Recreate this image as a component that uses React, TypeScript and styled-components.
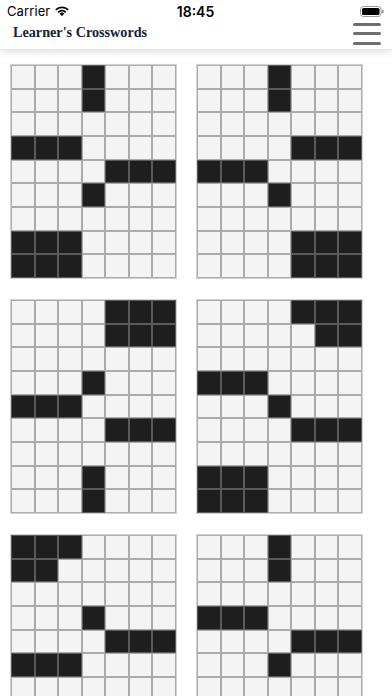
import React from "react";
import styled, { createGlobalStyle } from "styled-components";

const GlobalStyle = createGlobalStyle`
  html, body {
    margin: 0;
    padding: 0;
    background: #ffffff;
    font-family: "Inter", "Roboto", "Liberation Sans", sans-serif;
  }
  * { box-sizing: border-box; }
`;

const Header = styled.header`
  background: #ffffff;
  box-shadow: 0 2px 8px rgba(0, 0, 0, 0.16);
  position: relative;
  z-index: 2;
`;

const StatusBar = styled.div`
  height: 22px;
  display: grid;
  grid-template-columns: 1fr auto 1fr;
  align-items: center;
  padding: 0 8px 0 7px;
  color: #000;
`;

const Carrier = styled.div`
  display: flex;
  align-items: center;
  gap: 4px;
  font-size: 13px;
  letter-spacing: 0.1px;
`;

const Time = styled.div`
  font-size: 14px;
  font-weight: 600;
  text-align: center;
`;

const Battery = styled.div`
  display: flex;
  justify-content: flex-end;
  align-items: center;
`;

const AppBar = styled.div`
  height: 27px;
  display: flex;
  align-items: center;
  justify-content: space-between;
  padding: 0 11px 7px 13px;
`;

const Title = styled.h1`
  margin: 0;
  font-family: "Liberation Serif", "Times New Roman", serif;
  font-weight: 700;
  font-size: 14.2px;
  color: #10233a;
`;

const Burger = styled.div`
  display: flex;
  flex-direction: column;
  gap: 6.5px;
  width: 28px;
  margin-top: 3px;
`;

const Bar = styled.span`
  display: block;
  height: 3px;
  border-radius: 2px;
  background: #6e6e6e;
`;

const Main = styled.main`
  padding: 15px 0 0 10px;
  display: flex;
  flex-wrap: wrap;
  column-gap: 19px;
  row-gap: 20px;
`;

const Puzzle = styled.div`
  width: 167px;
  height: 215px;
  border: 1px solid #d2d2d2;
  display: grid;
  grid-template-columns: repeat(7, 1fr);
  grid-template-rows: repeat(9, 1fr);
`;

const Cell = styled.div<{ $block: boolean }>`
  border: 1px solid ${(p) => (p.$block ? "#5a5a5a" : "#ababab")};
  background: ${(p) => (p.$block ? "#1e1e1e" : "#f4f4f4")};
`;

const patterns: number[][][] = [
  [[3], [3], [], [0, 1, 2], [4, 5, 6], [3], [], [0, 1, 2], [0, 1, 2]],
  [[3], [3], [], [4, 5, 6], [0, 1, 2], [3], [], [4, 5, 6], [4, 5, 6]],
  [[4, 5, 6], [4, 5, 6], [], [3], [0, 1, 2], [4, 5, 6], [], [3], [3]],
  [[4, 5, 6], [5, 6], [], [0, 1, 2], [3], [4, 5, 6], [], [0, 1, 2], [0, 1, 2]],
  [[0, 1, 2], [0, 1], [], [3], [4, 5, 6], [0, 1, 2], [], [5, 6], [4, 5, 6]],
  [[3], [3], [], [0, 1, 2], [4, 5, 6], [3], [], [0, 1, 2], [0, 1, 2]],
];

const Wifi = () => (
  <svg width="16" height="12" viewBox="0 0 16 12">
    <path d="M8 11.2 L5.6 8.6 A3.6 3.6 0 0 1 10.4 8.6 Z" fill="#000" />
    <path d="M3.6 6.6 A6.4 6.4 0 0 1 12.4 6.6 L11.2 7.9 A4.6 4.6 0 0 0 4.8 7.9 Z" fill="#000" />
    <path d="M1.2 4.2 A9.8 9.8 0 0 1 14.8 4.2 L13.6 5.5 A8 8 0 0 0 2.4 5.5 Z" fill="#000" />
  </svg>
);

const BatteryIcon = () => (
  <svg width="24" height="11" viewBox="0 0 24 11">
    <rect x="0.5" y="0.5" width="20.5" height="10" rx="2.8" fill="none" stroke="#9a9a9a" />
    <rect x="2" y="2" width="17.5" height="7" rx="1.6" fill="#000" />
    <path d="M22 3.6 a1.6 1.6 0 0 1 0 3.8 Z" fill="#9a9a9a" />
  </svg>
);

export default function App() {
  return (
    <>
      <GlobalStyle />
      <Header>
        <StatusBar>
          <Carrier>
            Carrier <Wifi />
          </Carrier>
          <Time>18:45</Time>
          <Battery>
            <BatteryIcon />
          </Battery>
        </StatusBar>
        <AppBar>
          <Title>Learner's Crosswords</Title>
          <Burger>
            <Bar />
            <Bar />
            <Bar />
          </Burger>
        </AppBar>
      </Header>
      <Main>
        {patterns.map((rows, i) => (
          <Puzzle key={i}>
            {rows.map((blocks, r) =>
              Array.from({ length: 7 }, (_, c) => (
                <Cell key={`${r}-${c}`} $block={blocks.includes(c)} />
              ))
            )}
          </Puzzle>
        ))}
      </Main>
    </>
  );
}
